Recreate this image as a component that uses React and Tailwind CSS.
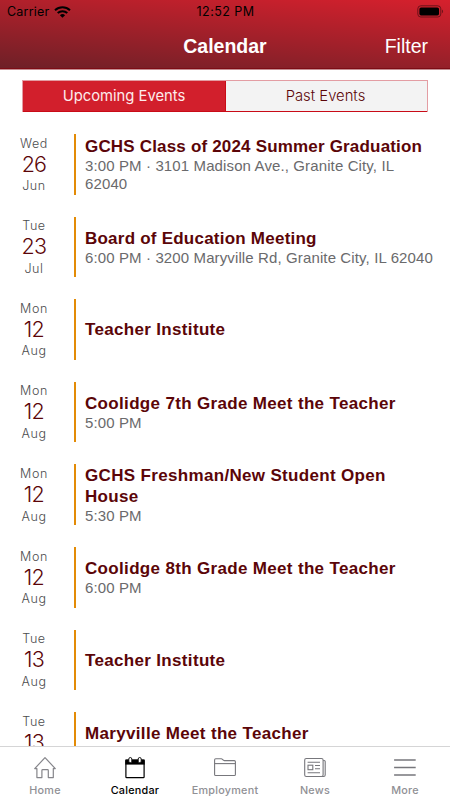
import clsx from "clsx";

const events = [
  {
    day: "Wed",
    date: "26",
    month: "Jun",
    title: "GCHS Class of 2024 Summer Graduation",
    detail: "3:00 PM · 3101 Madison Ave., Granite City, IL 62040",
    tracking: "tracking-[0.18px]",
  },
  {
    day: "Tue",
    date: "23",
    month: "Jul",
    title: "Board of Education Meeting",
    detail: "6:00 PM · 3200 Maryville Rd, Granite City, IL 62040",
    tracking: "tracking-[0.23px]",
  },
  { day: "Mon", date: "12", month: "Aug", title: "Teacher Institute" },
  { day: "Mon", date: "12", month: "Aug", title: "Coolidge 7th Grade Meet the Teacher", detail: "5:00 PM" },
  { day: "Mon", date: "12", month: "Aug", title: "GCHS Freshman/New Student Open House", detail: "5:30 PM" },
  { day: "Mon", date: "12", month: "Aug", title: "Coolidge 8th Grade Meet the Teacher", detail: "6:00 PM" },
  { day: "Tue", date: "13", month: "Aug", title: "Teacher Institute" },
  { day: "Tue", date: "13", month: "Aug", title: "Maryville Meet the Teacher", detail: "5:00 PM" },
];

function WifiIcon() {
  return (
    <svg width="17" height="12" viewBox="0 0 17 12" fill="none" stroke="black" strokeWidth="2">
      <path d="M1 4.3a11 11 0 0 1 15 0" />
      <path d="M3.7 7.1a7 7 0 0 1 9.6 0" />
      <path d="M8.5 11.8 5.9 9.3a3.8 3.8 0 0 1 5.2 0Z" fill="black" stroke="none" />
    </svg>
  );
}

function BatteryIcon() {
  return (
    <svg width="27" height="13" viewBox="0 0 27 13" fill="none">
      <rect x="0.8" y="0.8" width="23" height="11.2" rx="3" stroke="#6d1219" />
      <rect x="2.4" y="2.4" width="19.6" height="8" rx="1.6" fill="black" />
      <path d="M25 4.6c1.4.5 1.4 3.2 0 3.7Z" fill="#6d1219" />
    </svg>
  );
}

function HomeIcon() {
  return (
    <svg width="24" height="24" viewBox="0 0 24 24" fill="none" stroke="#85858a" strokeWidth="1.2">
      <path
        d="M1.7 12.6 12 1.6l10.3 11h-2v9h-5v-7.2c0-.5-.3-.8-.8-.8H9.7c-.5 0-.8.3-.8.8v7.2h-5v-9Z"
        strokeLinejoin="round"
      />
    </svg>
  );
}

function CalendarIcon() {
  return (
    <svg width="24" height="24" viewBox="0 0 24 24" fill="none">
      <path d="M2.3 3.6h19.4v5H2.3Z" fill="black" />
      <rect x="2.9" y="4.2" width="18.2" height="17.5" rx="0.8" stroke="black" strokeWidth="1.2" />
      <rect x="5.8" y="1.5" width="3" height="5.2" rx="1.5" fill="white" stroke="black" strokeWidth="0.9" />
      <rect x="15.2" y="1.5" width="3" height="5.2" rx="1.5" fill="white" stroke="black" strokeWidth="0.9" />
    </svg>
  );
}

function FolderIcon() {
  return (
    <svg width="24" height="24" viewBox="0 0 24 24" fill="none" stroke="#77777c" strokeWidth="1.1">
      <path d="M1.6 18.4V3.9c0-.7.4-1.1 1.1-1.1h5.6c1.3 0 1.5 1.8 3.1 1.8h9.9c.7 0 1.1.4 1.1 1.1v12.7c0 .7-.4 1.1-1.1 1.1H2.7c-.7 0-1.1-.4-1.1-1.1Z" />
      <path d="M1.6 7.6h20.8" />
    </svg>
  );
}

function NewsIcon() {
  return (
    <svg width="24" height="24" viewBox="0 0 24 24" fill="none" stroke="#77777c" strokeWidth="1.1">
      <rect x="1.7" y="2.5" width="18.4" height="18" rx="1.6" />
      <path d="M20.2 4.5h1c.6 0 1 .4 1 1v13.4c0 1-.8 1.6-1.6 1.6h-2.2" />
      <path d="M4.6 6.2H17M12 9.5h5M12 12.8h5M4.6 16.8H17" />
      <rect x="5" y="9.2" width="4.8" height="4.5" />
    </svg>
  );
}

function MoreIcon() {
  return (
    <svg width="24" height="24" viewBox="0 0 24 24" fill="none" stroke="#77777c" strokeWidth="1.4">
      <path d="M1.1 4h21.6M1.1 11.5h21.6M1.1 19h21.6" />
    </svg>
  );
}

const tabs = [
  { label: "Home", icon: HomeIcon },
  { label: "Calendar", icon: CalendarIcon, active: true },
  { label: "Employment", icon: FolderIcon },
  { label: "News", icon: NewsIcon },
  { label: "More", icon: MoreIcon },
];

function EventRow({ event }) {
  return (
    <div className="flex h-[60.6px] shrink-0">
      <div className="flex w-[68px] flex-col items-center pt-[0.6px] font-['Inter',sans-serif] text-[12.5px] tracking-[0.6px] text-[#4c4c4e]">
        <span className="leading-[17px] font-light">{event.day}</span>
        <span className="text-[21.5px] leading-[25.6px] font-light tracking-[-0.7px] text-[#5b0508]">{event.date}</span>
        <span className="leading-[17px] font-light">{event.month}</span>
      </div>
      <div className="ml-[6px] w-[2px] bg-[#e38b06]" />
      <div className="ml-[9px] flex w-[354px] flex-col justify-center pt-[0.8px]">
        <h2
          className={clsx(
            "text-[17px] leading-[21px] font-bold text-[#5b0508]",
            event.tracking || "tracking-[0.33px]"
          )}
        >
          {event.title}
        </h2>
        {event.detail ? (
          <p className="text-[15px] leading-[18px] tracking-[0.12px] text-[#6a6a6c]">{event.detail}</p>
        ) : null}
      </div>
    </div>
  );
}

export default function App() {
  return (
    <div className="flex h-[800px] w-[450px] flex-col overflow-hidden bg-white font-['Liberation_Sans',Arial,sans-serif]">
      <header className="h-[70px] shrink-0 border-b border-[#c58f93] bg-[linear-gradient(185deg,#d6202d_0%,#6d2027_100%)] shadow-[inset_0_-1px_0_#7d0c15]">
        <div className="grid h-[24px] grid-cols-3 items-center pr-[6px] pl-[7px] font-['Inter',sans-serif] text-[12.5px] text-black">
          <div className="flex items-center gap-[5px]">
            <span className="tracking-[0.2px]">Carrier</span>
            <WifiIcon />
          </div>
          <span className="text-center tracking-[0.45px]">12:52 PM</span>
          <div className="flex justify-end pb-px">
            <BatteryIcon />
          </div>
        </div>
        <div className="grid h-[45px] grid-cols-3 items-center px-[22px] text-white">
          <span />
          <h1 className="text-center text-[19.5px] font-bold">Calendar</h1>
          <button className="text-right text-[19.5px]">Filter</button>
        </div>
      </header>

      <div className="mt-[10px] ml-[22px] flex h-[32px] w-[406px] shrink-0 bg-[#c90b17] px-px pb-px font-['Inter',sans-serif] text-[14.8px] shadow-[inset_0_1px_0_#e39da3,inset_-1px_0_0_#e39da3,inset_1px_0_0_#e39da3]">
        <button className="mt-px w-[202px] bg-[#d21f2c] pt-px text-[#fdecec]">Upcoming Events</button>
        <button className="mt-px ml-px flex-1 bg-[#f3f3f3] pt-px pr-0.5 font-light text-[#5b0508]">
          Past Events
        </button>
      </div>

      <main className="mt-[22px] flex min-h-0 flex-1 flex-col gap-[22px] overflow-hidden">
        {events.map((event, i) => (
          <EventRow key={i} event={event} />
        ))}
      </main>

      <nav className="grid h-[54px] shrink-0 grid-cols-5 border-t border-[#d5d5d6] bg-white">
        {tabs.map(({ label, icon: Icon, active }) => (
          <div
            key={label}
            className={clsx(
              "flex flex-col items-center pt-[9px] font-['Inter',sans-serif] text-[10.8px] leading-[21px] font-medium tracking-[0.25px]",
              active ? "text-black" : "text-[#909095]"
            )}
          >
            <Icon />
            <span>{label}</span>
          </div>
        ))}
      </nav>
    </div>
  );
}
